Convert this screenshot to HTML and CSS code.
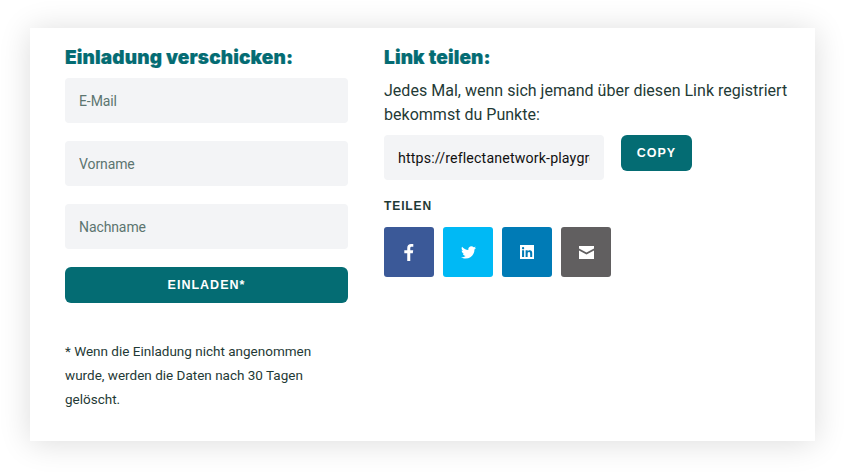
FILE: index.html
```html
<!DOCTYPE html>
<html lang="de">
<head>
<meta charset="utf-8">
<title>Einladung</title>
<link rel="stylesheet" href="styles.css">
</head>
<body>
<main class="card">
  <section class="col-left">
    <h2 class="title">Einladung verschicken:</h2>
    <form class="form">
      <input class="field" type="email" placeholder="E-Mail">
      <input class="field" type="text" placeholder="Vorname">
      <input class="field" type="text" placeholder="Nachname">
      <button class="btn btn-wide" type="button">EINLADEN*</button>
    </form>
    <p class="note">* Wenn die Einladung nicht angenommen wurde, werden die Daten nach 30 Tagen gelöscht.</p>
  </section>
  <section class="col-right">
    <h2 class="title">Link teilen:</h2>
    <p class="lead">Jedes Mal, wenn sich jemand über diesen Link registriert bekommst du Punkte:</p>
    <div class="link-row">
      <input class="field link-box" type="text" value="https://reflectanetwork-playground.example" readonly>
      <button class="btn btn-copy" type="button">COPY</button>
    </div>
    <h3 class="share-title">TEILEN</h3>
    <div class="share-row">
      <a class="share fb"><svg width="10" height="17" viewBox="1 .6 9.600 17.400"><path fill="#fff" d="M4 18V10H1V7h3V4.600C4 2 5.600 .6 7.900 .6c1.100 0 2 .1 2.300 .1v2.700H8.600c-1.200 0-1.500 .6-1.500 1.500V7h3l-.4 3H7.100v8z"/></svg></a>
      <a class="share tw"><svg width="15" height="13" viewBox="0 0 24 20"><path fill="#fff" d="M24 2.400c-.9 .4-1.800 .7-2.800 .8 1-.6 1.800-1.600 2.200-2.700-1 .6-2 1-3.100 1.200C19.300 .7 18 0 16.600 0c-3.200 0-5.500 2.900-4.800 6C7.700 5.800 4.100 3.900 1.700 .9 .4 3.100 1 6 3.200 7.500c-.8 0-1.600-.2-2.200-.6 0 2.300 1.600 4.500 4 5-.7 .2-1.500 .2-2.200 .1 .6 2 2.500 3.400 4.600 3.400C5.300 17 2.700 17.800 0 17.500 2.200 18.900 4.800 19.700 7.500 19.700c9.100 0 14.300-7.700 14-14.600 1-.7 1.800-1.600 2.500-2.700z"/></svg></a>
      <a class="share li"><svg width="14" height="14" viewBox="0 0 15 15"><path fill="#fff" fill-rule="evenodd" d="M0 0h15v15H0zM2.200 5.700v7.100h2.200V5.700zM3.300 2.200a1.250 1.250 0 1 0 0 2.500 1.250 1.250 0 0 0 0-2.500zM6 5.700v7.100h2.200V9.300c0-1 .2-1.900 1.400-1.900s1.300 1.100 1.300 2v3.400h2.200V8.900c0-1.900-.4-3.400-2.700-3.400-1.100 0-1.800 .6-2.100 1.200h0v-1z"/></svg></a>
      <a class="share em"><svg width="15" height="13" viewBox="0 0 15 13"><path fill="#fff" d="M0 0h15v2.600L7.500 6.600 0 2.600zM0 4.400l7.500 4 7.500-4V13H0z"/></svg></a>
    </div>
  </section>
</main>
</body>
</html>
```
FILE: styles.css
```css
* { box-sizing: border-box; }
html, body { margin: 0; height: 100%; background: #fff; overflow: hidden; }
body { padding: 28px 30px 32px; font-family: "Roboto", sans-serif; color: #1f3a36; }
.card {
  width: 785px;
  height: 413px;
  background: #fff;
  padding: 18px 0 0 35px;
  display: flex;
  gap: 36px;
  box-shadow: 0 2px 30px rgba(0, 0, 0, .14);
}
.col-left { width: 283px; flex: none; }
.col-right { flex: 1; }
.title {
  margin: 0;
  font-family: "Inter", sans-serif;
  font-weight: 900;
  font-size: 19px;
  line-height: 24px;
  letter-spacing: .14px;
  -webkit-text-stroke: .2px #046c73;
  color: #046c73;
}
.form { margin-top: 8px; display: flex; flex-direction: column; gap: 18px; }
.field {
  display: block;
  width: 100%;
  height: 45px;
  margin: 0;
  border: 0;
  outline: 0;
  background: #f3f4f6;
  border-radius: 4px;
  padding: 0 14px;
  font-family: "Roboto", sans-serif;
  font-size: 14px;
  letter-spacing: -.1px;
  color: #5c7570;
}
.field::placeholder { color: #5c7570; opacity: 1; }
.btn {
  display: block;
  padding: 0;
  border: 0;
  background: #046c73;
  border-radius: 6px;
  color: #fff;
  font-family: "Liberation Sans", sans-serif;
  font-weight: 700;
  font-size: 12.500px;
  letter-spacing: 1px;
  text-align: center;
}
.btn-wide { width: 100%; height: 36px; }
.note {
  margin: 36px 0 0;
  width: 262px;
  font-size: 13.500px;
  line-height: 24px;
}
.lead {
  margin: 9px 0 0;
  font-size: 16px;
  line-height: 24px;
  letter-spacing: .02px;
}
.link-row { margin-top: 8px; display: flex; gap: 17px; align-items: flex-start; }
.link-box {
  flex: none;
  width: 220px;
  padding: 0 14px;
  font-size: 14.200px;
  letter-spacing: .15px;
  color: #111;
}
.btn-copy { flex: none; width: 71px; height: 36px; }
.share-title {
  margin: 18px 0 0;
  font-family: "Liberation Sans", sans-serif;
  font-weight: 700;
  font-size: 12px;
  line-height: 16px;
  letter-spacing: .9px;
}
.share-row { margin-top: 13px; display: flex; gap: 9px; }
.share {
  width: 50px;
  height: 50px;
  border-radius: 3px;
  display: flex;
  align-items: center;
  justify-content: center;
}
.fb { background: #3b5998; }
.tw { background: #00b9f5; }
.li { background: #007bb6; }
.em { background: #615f60; }
```
